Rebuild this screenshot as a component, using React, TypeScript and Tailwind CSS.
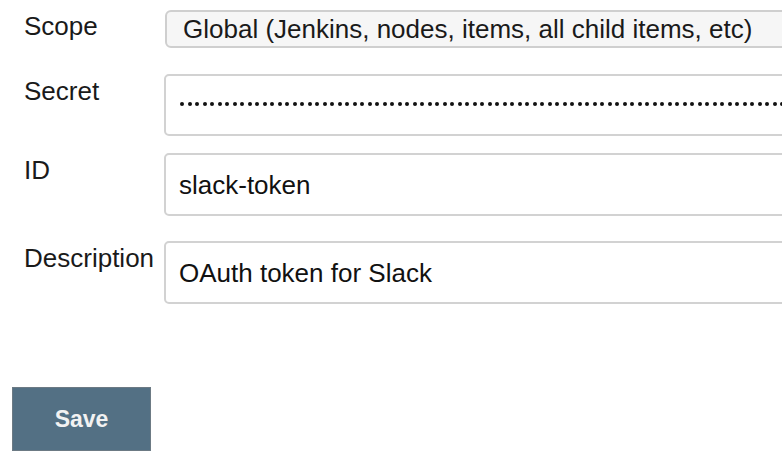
import React from "react";

const font = { fontFamily: '"Liberation Sans", Arial, Helvetica, sans-serif' };

export default function App() {
  const dots = Array.from({ length: 90 });
  return (
    <div
      className="w-[782px] h-[460px] overflow-hidden bg-white text-[#1a1a1a] relative"
      style={font}
    >
      <div className="flex flex-col pt-[10px]">
        {/* Scope */}
        <div className="flex items-start">
          <div className="w-[165px] shrink-0 pl-[24px] pt-[1px] text-[26px] leading-[30px]">Scope</div>
          <div className="w-[700px] shrink-0 h-[38px] border-2 border-[#cfcfcf] rounded-[6px] bg-[#f6f6f6] pl-[16px] flex items-center text-[26px] leading-[30px] whitespace-nowrap">
            Global (Jenkins, nodes, items, all child items, etc)
          </div>
        </div>
        {/* Secret */}
        <div className="flex items-start mt-[26px]">
          <div className="w-[164px] shrink-0 pl-[24px] pt-[2px] text-[26px] leading-[30px]">Secret</div>
          <div className="w-[700px] shrink-0 h-[62px] border-2 border-[#d2d2d2] rounded-[5px] bg-white pl-[14px] pb-[2px] flex items-center gap-[3.5px] overflow-hidden">
            {dots.map((_, i) => (
              <span key={i} className="w-[4px] h-[4px] shrink-0 rounded-full bg-[#111]" />
            ))}
          </div>
        </div>
        {/* ID */}
        <div className="flex items-start mt-[17px]">
          <div className="w-[164px] shrink-0 pl-[24px] pt-[2px] text-[26px] leading-[30px]">ID</div>
          <div className="w-[700px] shrink-0 h-[63px] border-2 border-[#d2d2d2] rounded-[5px] bg-white pl-[13px] flex items-center text-[26px] leading-[30px] text-[#111] whitespace-nowrap">
            slack-token
          </div>
        </div>
        {/* Description */}
        <div className="flex items-start mt-[25px]">
          <div className="w-[164px] shrink-0 pl-[24px] pt-[2px] text-[26px] leading-[30px]">Description</div>
          <div className="w-[700px] shrink-0 h-[63px] border-2 border-[#d2d2d2] rounded-[5px] bg-white pl-[13px] flex items-center text-[26px] leading-[30px] text-[#111] whitespace-nowrap">
            OAuth token for Slack
          </div>
        </div>
        {/* Save */}
        <div className="pl-[12px] mt-[83px]">
          <button className="w-[139px] h-[64px] bg-[#537084] border border-[#6c7a84] text-[#f2f2f2] font-bold text-[23px] flex items-center justify-center">
            Save
          </button>
        </div>
      </div>
    </div>
  );
}
